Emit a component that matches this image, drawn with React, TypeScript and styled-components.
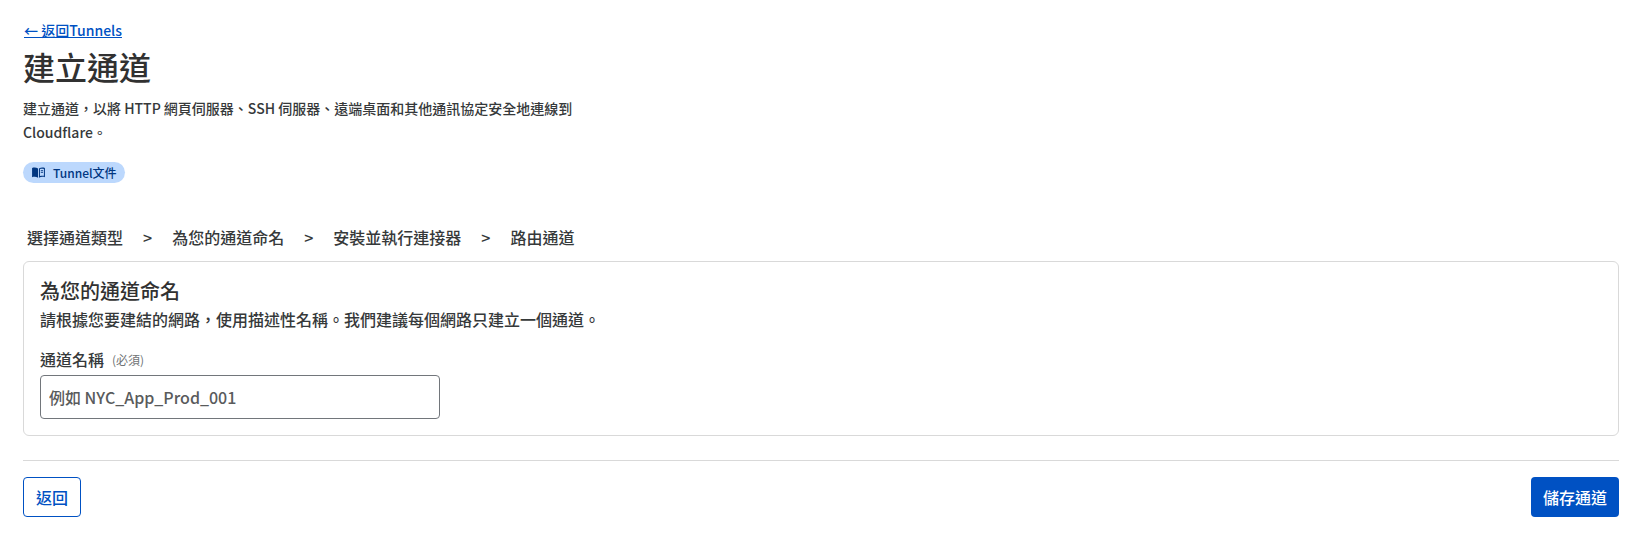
import React from "react";
import styled, { createGlobalStyle } from "styled-components";

const Global = createGlobalStyle`
  html, body { margin: 0; padding: 0; background: #fff; }
  body { font-family: "Noto Sans CJK TC", "Noto Sans", sans-serif; color: #36393a; }
  * { box-sizing: border-box; }
`;

const Page = styled.div`
  padding: 20px 18px 34px 23px;
  display: flex;
  flex-direction: column;
`;

const BackLink = styled.a`
  margin-left: 1px;
  font-size: 14px;
  line-height: 20px;
  font-weight: 500;
  color: #0051c3;
  text-decoration: underline;
  align-self: flex-start;
  cursor: pointer;
`;

const Title = styled.h1`
  margin: 5px 0 0;
  font-size: 32px;
  line-height: 42px;
  font-weight: 500;
  color: #313131;
`;

const Lead = styled.p`
  margin: 9px 0 0;
  width: 560px;
  font-size: 14px;
  line-height: 24px;
  font-weight: 500;
  color: #36393a;
`;

const Badge = styled.a`
  margin-top: 18px;
  align-self: flex-start;
  display: inline-flex;
  align-items: center;
  gap: 8px;
  height: 21px;
  padding: 0 8px 0 9px;
  border-radius: 11px;
  background: #bcd8fd;
  color: #003681;
  font-size: 12px;
  font-weight: 500;
`;

const Steps = styled.ol`
  list-style: none;
  margin: 42px 0 0;
  padding: 0 0 0 4px;
  display: flex;
  align-items: center;
  height: 24px;
  gap: 20px;
  font-size: 16px;
  font-weight: 500;
  color: #36393a;
`;

const Step = styled.li``;

const Card = styled.section`
  margin-top: 12px;
  border: 1px solid #d9d9d9;
  border-radius: 6px;
  padding: 15px 16px 16px;
  display: flex;
  flex-direction: column;
`;

const CardTitle = styled.h2`
  margin: 0 0 2px;
  font-size: 20px;
  line-height: 28px;
  font-weight: 500;
  color: #313131;
`;

const CardText = styled.p`
  margin: 0;
  font-size: 16px;
  line-height: 24px;
  font-weight: 500;
  color: #36393a;
`;

const Label = styled.label`
  margin-top: 16px;
  display: flex;
  align-items: center;
  gap: 8px;
  height: 24px;
  font-size: 16px;
  font-weight: 500;
`;

const Required = styled.span`
  font-size: 12px;
  font-weight: 400;
  color: #6f7375;
`;

const NameInput = styled.input`
  margin-top: 4px;
  width: 400px;
  height: 44px;
  padding: 0 8px;
  border: 1px solid #72767b;
  border-radius: 4px;
  font-family: inherit;
  font-size: 16px;
  font-weight: 500;
  outline: none;
  &::placeholder { color: #595b5c; opacity: 1; }
`;

const Divider = styled.hr`
  margin: 24px 0 0;
  border: 0;
  border-top: 1px solid #d9d9d9;
`;

const Actions = styled.div`
  margin-top: 16px;
  display: flex;
  justify-content: space-between;
`;

const Button = styled.button<{ $primary?: boolean }>`
  height: 40px;
  padding: 0 12px;
  border-radius: 4px;
  border: ${(p) => (p.$primary ? "0" : "1px solid #0051c3")};
  background: ${(p) => (p.$primary ? "#0051c3" : "#fff")};
  color: ${(p) => (p.$primary ? "#fff" : "#0051c3")};
  font-family: inherit;
  font-size: 16px;
  font-weight: 500;
  cursor: pointer;
`;

const BookIcon = () => (
  <svg width="13" height="11" viewBox="0 0 14 12" aria-hidden="true">
    <path d="M0 1.2 C2 0.4 4.5 0.5 6.5 1.6 V11.6 C4.5 10.6 2 10.5 0 11.2 Z" fill="#003681" />
    <path d="M7.5 1.6 C9.5 0.5 12 0.4 14 1.2 V11.2 C12 10.5 9.5 10.6 7.5 11.6 Z M8.6 2.3 V9.9 C10 9.4 11.5 9.3 12.9 9.6 V2.1 C11.5 1.8 10 1.8 8.6 2.3 Z" fill="#003681" />
    <path d="M9.5 3.6 H12 V4.5 H9.5 Z M9.5 5.6 H12 V6.5 H9.5 Z" fill="#003681" />
  </svg>
);

export default function App() {
  return (
    <>
      <Global />
      <Page>
        <BackLink>← 返回Tunnels</BackLink>
        <Title>建立通道</Title>
        <Lead>建立通道，以將 HTTP 網頁伺服器、SSH 伺服器、遠端桌面和其他通訊協定安全地連線到 Cloudflare。</Lead>
        <Badge><BookIcon />Tunnel文件</Badge>
        <Steps>
          <Step>選擇通道類型</Step>
          <Step>&gt;</Step>
          <Step>為您的通道命名</Step>
          <Step>&gt;</Step>
          <Step>安裝並執行連接器</Step>
          <Step>&gt;</Step>
          <Step>路由通道</Step>
        </Steps>
        <Card>
          <CardTitle>為您的通道命名</CardTitle>
          <CardText>請根據您要建結的網路，使用描述性名稱。我們建議每個網路只建立一個通道。</CardText>
          <Label>通道名稱 <Required>(必須)</Required></Label>
          <NameInput placeholder="例如 NYC_App_Prod_001" />
        </Card>
        <Divider />
        <Actions>
          <Button>返回</Button>
          <Button $primary>儲存通道</Button>
        </Actions>
      </Page>
    </>
  );
}
